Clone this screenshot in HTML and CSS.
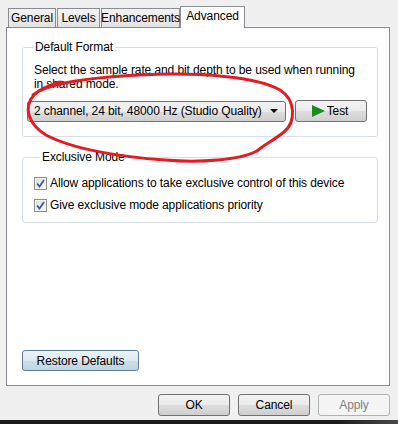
FILE: index.html
```html
<!DOCTYPE html>
<html>
<head>
<meta charset="utf-8">
<link rel="stylesheet" href="styles.css">
</head>
<body>
<div class="dialog">
  <div class="tabs">
    <div class="tab t-general">General</div>
    <div class="tab t-levels">Levels</div>
    <div class="tab t-enh">Enhancements</div>
    <div class="tab t-adv selected">Advanced</div>
  </div>
  <div class="panel">
    <fieldset class="group g-format">
      <legend>Default Format</legend>
      <p class="desc">Select the sample rate and bit depth to be used when running<br>in shared mode.</p>
      <div class="format-row">
        <div class="combo">
          <span class="combo-text">2 channel, 24 bit, 48000 Hz (Studio Quality)</span>
          <span class="combo-arrow"></span>
        </div>
        <div class="btn btn-test"><span class="play"></span>Test</div>
      </div>
    </fieldset>
    <fieldset class="group g-excl">
      <legend>Exclusive Mode</legend>
      <div class="check-row">
        <span class="checkbox"><svg width="9" height="9" viewBox="0 0 9 9"><path d="M1 4.5 L3.5 7.5 L8 1" fill="none" stroke="#3b5aa3" stroke-width="1.8"/></svg></span>
        <span class="label">Allow applications to take exclusive control of this device</span>
      </div>
      <div class="check-row">
        <span class="checkbox"><svg width="9" height="9" viewBox="0 0 9 9"><path d="M1 4.5 L3.5 7.5 L8 1" fill="none" stroke="#3b5aa3" stroke-width="1.8"/></svg></span>
        <span class="label">Give exclusive mode applications priority</span>
      </div>
    </fieldset>
    <div class="spacer"></div>
    <div class="btn btn-restore">Restore Defaults</div>
  </div>
  <div class="footer">
    <div class="btn btn-foot">OK</div>
    <div class="btn btn-foot">Cancel</div>
    <div class="btn btn-foot disabled">Apply</div>
  </div>
  <div class="taskbar"></div>
</div>
<svg class="scribble" width="398" height="424" viewBox="0 0 398 424">
  <path d="M33,95 C45,85 80,78 140,75 C200,72 258,77 280,90 C296,100 296,122 284,132 C274,140 264,145 257,151 C240,160 200,163 165,160 C120,157 72,149 46,135 C28,124 23,107 34,95 C41,88 50,85 60,82" fill="none" stroke="#e41b23" stroke-width="3" stroke-linecap="round"/>
</svg>
</body>
</html>
```

FILE: styles.css
```css
html, body {
  margin: 0;
  padding: 0;
}
body {
  width: 398px;
  height: 424px;
  background: #f0f0f0;
  font-family: "Liberation Sans", Arial, sans-serif;
  font-size: 12px;
  letter-spacing: -0.1px;
  color: #000;
  overflow: hidden;
  position: relative;
}
.dialog {
  display: flex;
  flex-direction: column;
  height: 424px;
}
.tabs {
  display: flex;
  align-items: flex-end;
  height: 28px;
  padding-left: 8px;
  position: relative;
  z-index: 2;
}
.tab {
  box-sizing: border-box;
  height: 19px;
  border: 1px solid #898c95;
  border-bottom: none;
  background: linear-gradient(#f2f2f2, #e3e3e3);
  display: flex;
  align-items: center;
  justify-content: center;
  line-height: 1;
  margin-right: 1px;
  margin-bottom: 1px;
  white-space: nowrap;
}
.t-general { width: 48px; }
.t-levels { width: 43px; }
.t-enh { width: 79px; }
.t-adv { width: 65px; }
.tab.selected {
  height: 22px;
  background: #fff;
  margin-bottom: 0;
  margin-left: -1px;
  padding-bottom: 3px;
  border-color: #898c95;
}
.panel {
  box-sizing: border-box;
  margin: -1px 8px 0 6px;
  height: 359px;
  border: 1px solid #898c95;
  background: #fff;
  display: flex;
  flex-direction: column;
  padding: 12px 11px 14px 15px;
}
.group {
  margin: 0;
  border: 1px solid #d5dfe5;
  border-radius: 3px;
  padding: 0;
}
.group legend {
  padding: 0 2px;
  margin-left: 6px;
  line-height: 14px;
}
.g-format {
  padding: 9px 10px 14px 4px;
}
.desc {
  margin: 0 0 0 7px;
  line-height: 14px;
  white-space: nowrap;
}
.format-row {
  display: flex;
  align-items: center;
  gap: 9px;
  margin-top: 9px;
}
.combo {
  box-sizing: border-box;
  width: 259px;
  height: 21px;
  border: 1px solid #707070;
  border-radius: 3px;
  background: linear-gradient(#f2f2f2 0%, #ebebeb 50%, #dddddd 51%, #cfcfcf 100%);
  display: flex;
  align-items: center;
  padding: 0 7px 0 6px;
  justify-content: space-between;
}
.combo-text {
  white-space: nowrap;
}
.combo-arrow {
  width: 0;
  height: 0;
  border-left: 4px solid transparent;
  border-right: 4px solid transparent;
  border-top: 4px solid #000;
}
.btn {
  box-sizing: border-box;
  height: 22px;
  border: 1px solid #707070;
  border-radius: 3px;
  background: linear-gradient(#f2f2f2 0%, #ebebeb 50%, #dddddd 51%, #cfcfcf 100%);
  display: flex;
  align-items: center;
  justify-content: center;
  line-height: 1;
}
.btn-test {
  width: 72px;
  gap: 2px;
  padding-right: 2px;
}
.play {
  width: 0;
  height: 0;
  border-top: 6px solid transparent;
  border-bottom: 6px solid transparent;
  border-left: 13px solid #1d8a1d;
}
.g-excl {
  margin-top: 13px;
  padding: 8px 10px 6px 11px;
}
.check-row {
  display: flex;
  align-items: center;
  gap: 3px;
  height: 22px;
}
.label {
  white-space: nowrap;
}
.checkbox {
  box-sizing: border-box;
  width: 13px;
  height: 13px;
  border: 1px solid #8f8f8f;
  background: linear-gradient(135deg, #dcdcdc, #fdfdfd);
  display: flex;
  align-items: center;
  justify-content: center;
  box-shadow: inset 0 0 0 1px #f4f4f4;
}
.spacer {
  flex: 1;
}
.btn-restore {
  width: 117px;
  height: 21px;
  border-color: #5d7c97;
  background: linear-gradient(#eaf2f8 0%, #dfe9f1 50%, #cfdde8 51%, #c3d3e0 100%);
}
.footer {
  display: flex;
  justify-content: flex-end;
  gap: 8px;
  padding: 8px 8px 0 0;
  height: 26px;
}
.btn-foot {
  width: 72px;
}
.btn.disabled {
  border-color: #adb2b5;
  background: #f4f4f4;
  color: #838383;
}
.taskbar {
  margin-top: auto;
  height: 4px;
  background: linear-gradient(90deg, #1c1c1c 85%, #4a4a4a);
}
.scribble {
  position: absolute;
  left: 0;
  top: 0;
  pointer-events: none;
  z-index: 5;
}
```
